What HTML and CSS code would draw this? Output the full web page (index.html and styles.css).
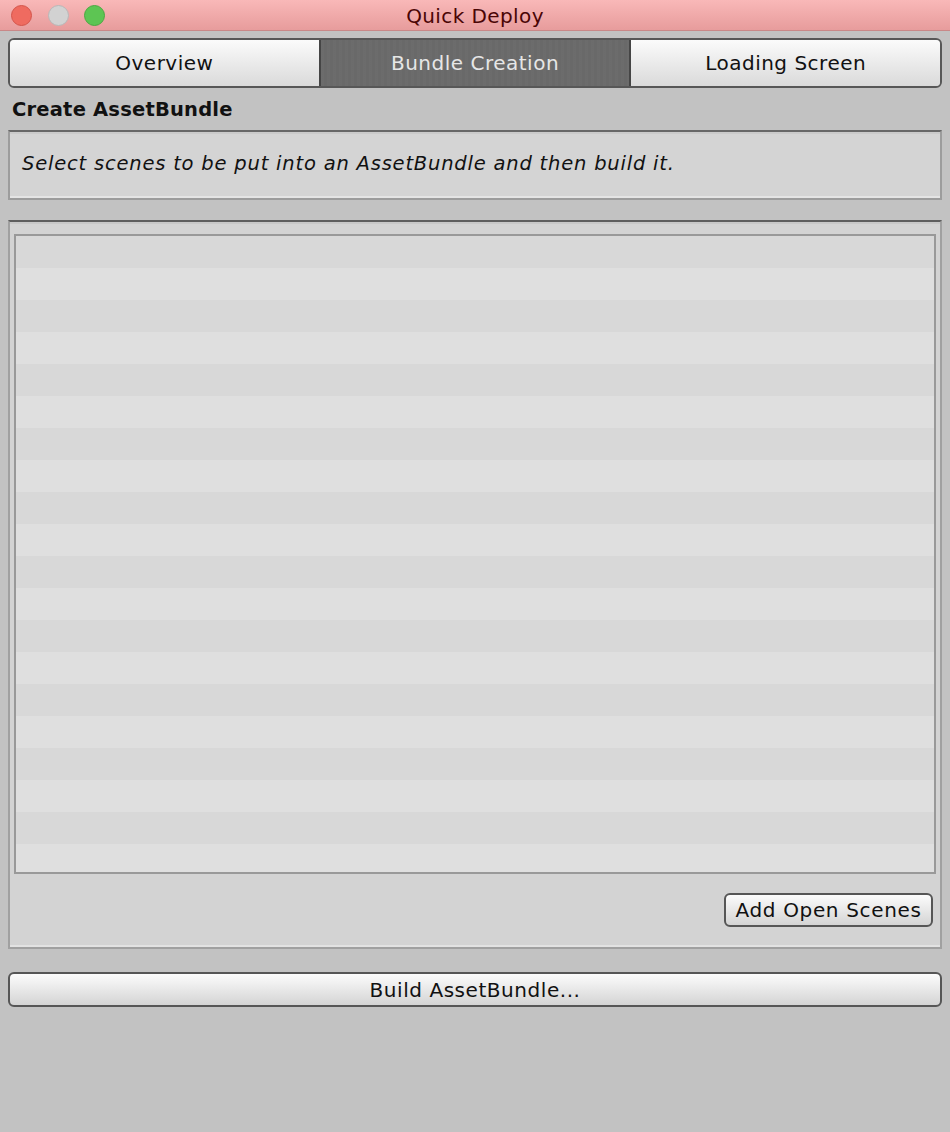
FILE: index.html
```html
<!DOCTYPE html>
<html>
<head>
<meta charset="utf-8">
<link rel="stylesheet" href="styles.css">
</head>
<body>
<div class="window">
  <div class="titlebar">
    <div class="lights">
      <span class="light red"></span>
      <span class="light gray"></span>
      <span class="light green"></span>
    </div>
    <div class="title">Quick Deploy</div>
  </div>
  <div class="content">
    <div class="tabs">
      <div class="tab">Overview</div>
      <div class="tab active">Bundle Creation</div>
      <div class="tab">Loading Screen</div>
    </div>
    <div class="heading">Create AssetBundle</div>
    <div class="helpbox">Select scenes to be put into an AssetBundle and then build it.</div>
    <div class="panel">
      <div class="list"></div>
      <div class="panel-actions">
        <button class="btn small">Add Open Scenes</button>
      </div>
    </div>
    <button class="btn wide">Build AssetBundle...</button>
  </div>
</div>
</body>
</html>
```

FILE: styles.css
```css
html, body {
  margin: 0;
  padding: 0;
}
body {
  width: 950px;
  height: 1132px;
  background: #c2c2c2;
  font-family: "DejaVu Sans", "Liberation Sans", sans-serif;
  color: #111;
  overflow: hidden;
}
.window {
  height: 1132px;
  background: #c2c2c2;
}
.titlebar {
  position: relative;
  height: 31px;
  background: linear-gradient(#f9b8b8, #e79c9c);
  border-bottom: 1px solid #c98888;
  box-sizing: border-box;
  display: flex;
  align-items: center;
  justify-content: center;
}
.lights {
  position: absolute;
  left: 11px;
  top: 5px;
  display: flex;
  gap: 14px;
}
.light {
  width: 21px;
  height: 21px;
  border-radius: 50%;
  box-sizing: border-box;
  display: block;
}
.light.red { background: #ef6b60; border: 1px solid #d4554b; }
.light.gray { background: #d2d2d2; border: 1px solid #b8b8b8; margin-left: 2px; }
.light.green { background: #5dc553; border: 1px solid #4aa842; margin-left: 1px; }
.title {
  font-size: 20px;
  color: #4a0505;
  line-height: 31px;
  padding-top: 2px;
  letter-spacing: 0.4px;
}
.content {
  padding: 7px 8px 0;
}
.tabs {
  display: flex;
  height: 50px;
  border: 2px solid #575757;
  border-radius: 6px;
  box-sizing: border-box;
  overflow: hidden;
}
.tab {
  flex: 1;
  display: flex;
  align-items: center;
  justify-content: center;
  font-size: 20px;
  letter-spacing: 0.5px;
  color: #111;
  background: linear-gradient(#fbfbfb, #dadada);
}
.tab.active {
  background-color: #6a6a6a;
  background-image: repeating-linear-gradient(90deg, rgba(255,255,255,0.012) 0 3px, rgba(0,0,0,0.012) 3px 6px);
  color: #e6e6e6;
  border-left: 2px solid #454545;
  border-right: 2px solid #454545;
}
.heading {
  font-weight: bold;
  font-size: 19.5px;
  letter-spacing: 0.2px;
  line-height: 42px;
  padding-left: 4px;
  padding-top: 1px;
  height: 42px;
  box-sizing: border-box;
}
.helpbox {
  height: 70px;
  box-sizing: border-box;
  background: #d4d4d4;
  border: 2px solid #9c9c9c;
  border-top-color: #676767;
  box-shadow: inset 0 -2px 0 #e4e4e4, inset 0 2px 0 #cacaca;
  font-style: italic;
  font-size: 19.5px;
  letter-spacing: 0.8px;
  display: flex;
  align-items: center;
  padding: 0 0 4px 12px;
}
.panel {
  margin-top: 20px;
  height: 729px;
  box-sizing: border-box;
  background: #d3d3d3;
  border: 2px solid #a0a0a0;
  border-top-color: #5e5e5e;
  box-shadow: inset 0 -2px 0 #e2e2e2, inset 0 2px 0 #c8c8c8;
  padding: 12px 4px 0;
}
.list {
  height: 640px;
  box-sizing: border-box;
  border: 2px solid #999;
  background: repeating-linear-gradient(#d8d8d8 0 32px, #dfdfdf 32px 64px);
}
.panel-actions {
  display: flex;
  justify-content: flex-end;
  padding: 19px 3px 0 0;
}
.btn {
  font-family: "DejaVu Sans", "Liberation Sans", sans-serif;
  font-size: 20px;
  color: #111;
  border: 2px solid #565656;
  border-radius: 6px;
  background: linear-gradient(#fcfcfc, #d4d4d4);
  box-sizing: border-box;
  padding: 0;
  margin: 0;
}
.btn.small {
  width: 209px;
  height: 34px;
  letter-spacing: 0.65px;
}
.btn.wide {
  display: block;
  width: 934px;
  height: 35px;
  margin-top: 23px;
  letter-spacing: 0.55px;
}
```
